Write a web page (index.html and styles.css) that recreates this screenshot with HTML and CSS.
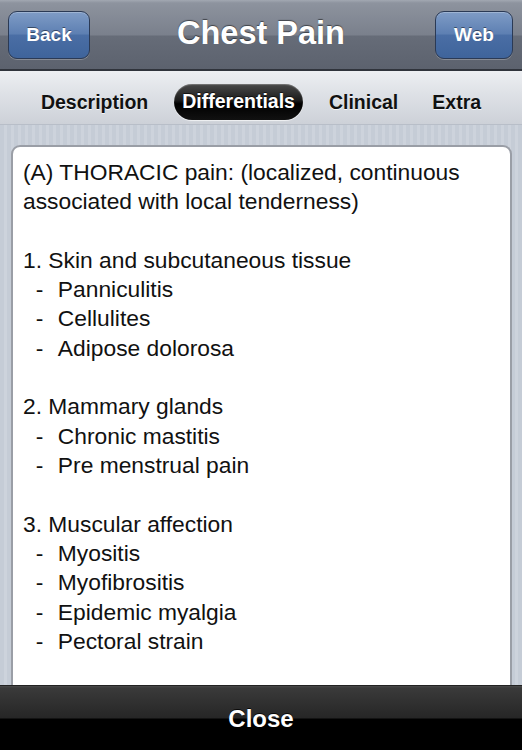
FILE: index.html
```html
<!DOCTYPE html>
<html>
<head>
<meta charset="utf-8">
<link rel="stylesheet" href="styles.css">
</head>
<body>
<div class="screen">
  <header class="navbar">
    <button class="navbtn">Back</button>
    <h1 class="title">Chest Pain</h1>
    <button class="navbtn">Web</button>
  </header>
  <nav class="tabs">
    <span class="tab">Description</span>
    <span class="tab active">Differentials</span>
    <span class="tab">Clinical</span>
    <span class="tab">Extra</span>
  </nav>
  <main class="content">
    <div class="card">
<pre class="text">(A) THORACIC pain: (localized, continuous
associated with local tenderness)

1. Skin and subcutaneous tissue
  -  &#8202;Panniculitis
  -  &#8202;Cellulites
  -  &#8202;Adipose dolorosa

2. Mammary glands
  -  &#8202;Chronic mastitis
  -  &#8202;Pre menstrual pain

3. Muscular affection
  -  &#8202;Myositis
  -  &#8202;Myofibrositis
  -  &#8202;Epidemic myalgia
  -  &#8202;Pectoral strain
</pre>
    </div>
  </main>
  <footer class="bottombar">
    <span class="close">Close</span>
  </footer>
</div>
</body>
</html>
```
FILE: styles.css
```css
* { box-sizing: border-box; margin: 0; padding: 0; }
html, body { width: 522px; height: 750px; overflow: hidden; }
body { font-family: "Liberation Sans", Arial, sans-serif; background: #c8cfd8; }
.screen { width: 522px; height: 750px; display: flex; flex-direction: column; }

.navbar {
  height: 71px;
  flex: none;
  display: flex;
  align-items: center;
  justify-content: space-between;
  padding: 0 9px 0 8px;
  background: linear-gradient(#a2a8b2 0px, #8d939e 3px, #7a808c 35px, #666c78 36px, #5c626e 69px);
  border-bottom: 2px solid #30343c;
}
.navbtn {
  font-family: "Liberation Sans", Arial, sans-serif;
  font-weight: bold;
  font-size: 19px;
  color: #fff;
  text-shadow: 0 -1px 0 rgba(0,0,0,0.45);
  width: 82px;
  height: 48px;
  border-radius: 9px;
  border: 1px solid #2b3a55;
  background: linear-gradient(#7f9cc6 0%, #5d7fb2 48%, #4a6ea5 50%, #3f649b 100%);
  box-shadow: 0 1px 0 rgba(255,255,255,0.25), inset 0 1px 0 rgba(255,255,255,0.25);
}
.navbtn:last-child { width: 78px; }
.title {
  font-size: 32.5px;
  font-weight: bold;
  color: #fff;
  text-shadow: 0 -1px 1px rgba(0,0,0,0.5);
  margin-top: -2px;
  margin-left: -3px;
}

.tabs {
  height: 54px;
  flex: none;
  display: flex;
  align-items: center;
  justify-content: center;
  padding: 9px 0 0 0;
  background: linear-gradient(#edeff2 0%, #dfe2e7 40%, #cdd1d8 100%);
  border-bottom: 1px solid #b8bec8;
}
.tab {
  font-size: 19.5px;
  font-weight: bold;
  color: #111;
  text-shadow: 0 1px 0 rgba(255,255,255,0.8);
  padding: 7px 9px;
  margin: 0 8px;
}
.tab.active {
  color: #fff;
  text-shadow: 0 -1px 0 rgba(0,0,0,0.6);
  background: linear-gradient(#4a4a4a 0%, #1c1c1c 45%, #000 55%, #111 100%);
  border-radius: 18px;
  padding: 6px 8px 7px;
  margin: 0 9px;
  box-shadow: 0 1px 1px rgba(255,255,255,0.7), inset 0 1px 1px rgba(255,255,255,0.25);
}

.content {
  flex: 1;
  min-height: 0;
  overflow: hidden;
  padding: 20px 10px 0 11px;
  background: repeating-linear-gradient(90deg, #c5ccd6 0px, #c5ccd6 4px, #cdd3dc 4px, #cdd3dc 7px);
}
.card {
  height: 100%;
  background: #fff;
  border: 2px solid #9a9ea6;
  border-bottom: none;
  border-radius: 9px 9px 0 0;
  padding: 10.5px 10px 0 10px;
}
.text {
  font-family: "Liberation Sans", Arial, sans-serif;
  font-size: 22.8px;
  line-height: 29.35px;
  color: #111;
  white-space: pre;
}

.bottombar {
  height: 65px;
  flex: none;
  display: flex;
  align-items: center;
  justify-content: center;
  background: linear-gradient(#4a4a4a 0px, #3a3a3a 2px, #262626 32px, #000 33px, #000 100%);
  border-top: 1px solid #222;
}
.close {
  font-size: 24px;
  font-weight: bold;
  color: #fff;
  text-shadow: 0 -1px 0 rgba(0,0,0,0.8);
  margin-top: 1px;
}
```
